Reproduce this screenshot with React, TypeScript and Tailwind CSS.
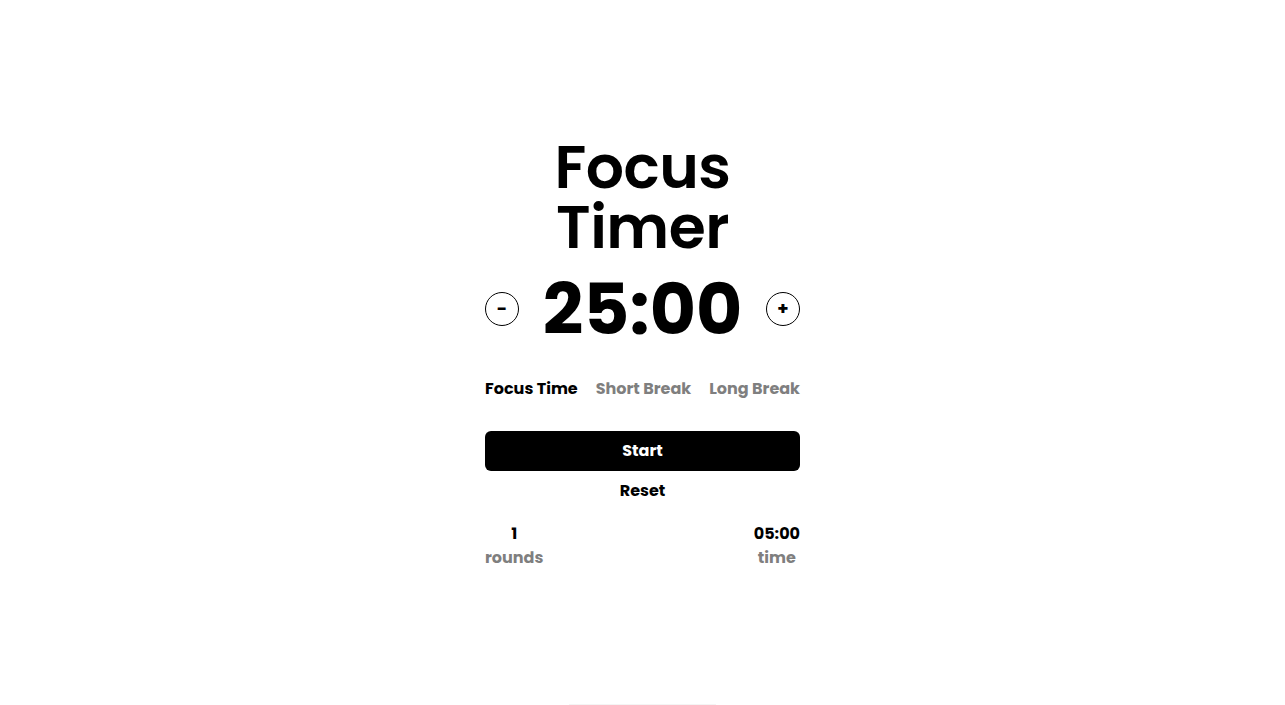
import React, { useState } from 'react';

const modes = ['Focus Time', 'Short Break', 'Long Break'];

export default function App() {
  const [mode, setMode] = useState(0);
  const [minutes, setMinutes] = useState(25);

  return (
    <div
      className="relative min-h-screen bg-white flex items-center justify-center pt-[2px] text-black"
      style={{ fontFamily: 'Poppins, Inter, "Noto Sans", sans-serif' }}
    >
      <div className="w-[315px] flex flex-col">
        <h1 className="text-[60px] leading-[60px] font-semibold text-center tracking-[-0.5px]">
          <span className="block">Focus</span>
          <span className="block">Timer</span>
        </h1>

        <div className="mt-[16px] flex items-center justify-between">
          <button
            onClick={() => setMinutes((m) => Math.max(1, m - 1))}
            className="w-[34px] h-[34px] rounded-full border border-black flex items-center justify-center text-lg font-bold leading-none"
          >
            -
          </button>
          <span className="text-[71px] leading-[72px] font-bold">
            {String(minutes).padStart(2, '0')}:00
          </span>
          <button
            onClick={() => setMinutes((m) => m + 1)}
            className="w-[34px] h-[34px] rounded-full border border-black flex items-center justify-center text-lg font-bold leading-none"
          >
            +
          </button>
        </div>

        <div className="mt-[32px] flex justify-between">
          {modes.map((m, i) => (
            <button
              key={m}
              onClick={() => setMode(i)}
              className={`text-base leading-6 font-bold ${i === mode ? 'text-black' : 'text-[#7f7f7f]'}`}
            >
              {m}
            </button>
          ))}
        </div>

        <button className="mt-[30px] h-10 w-full rounded-md bg-black text-white text-base font-bold">
          Start
        </button>
        <button className="mt-[8px] text-base leading-6 font-bold">Reset</button>

        <div className="mt-[19px] flex justify-between">
          <div className="flex flex-col items-center">
            <span className="text-base leading-6 font-bold">1</span>
            <span className="text-base leading-6 font-bold text-[#7f7f7f]">rounds</span>
          </div>
          <div className="flex flex-col items-center">
            <span className="text-base leading-6 font-bold">05:00</span>
            <span className="text-base leading-6 font-bold text-[#7f7f7f]">time</span>
          </div>
        </div>
      </div>
      <div className="absolute bottom-0 left-[569px] w-[147px] h-px bg-[#f4f4f4]" />
    </div>
  );
}
